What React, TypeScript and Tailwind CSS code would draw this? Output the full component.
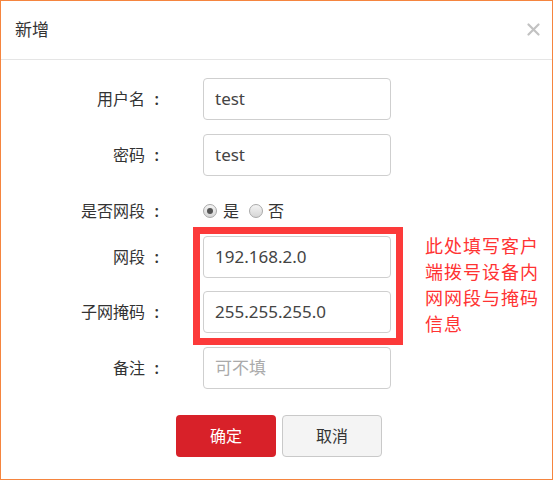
import React from "react";

const font = { fontFamily: '"Noto Sans","Noto Sans CJK SC",sans-serif' };

function Label({ text }: { text: string }) {
  return (
    <div className="w-[161px] flex justify-end text-[16px] text-[#333]">
      <span>{text}</span>
      <span className="inline-block w-[17px] text-right pr-[3px] font-semibold">:</span>
    </div>
  );
}

function Row({ label, children }: { label: string; children: React.ReactNode }) {
  return (
    <div className="flex items-center h-[42px]">
      <Label text={label} />
      <div className="ml-[41px]">{children}</div>
    </div>
  );
}

function Field({ value, placeholder }: { value?: string; placeholder?: string }) {
  return (
    <div className="w-[188px] h-[42px] border border-[#cfcfcf] rounded-[4px] px-[11px] flex items-center text-[17px] bg-white">
      {value ? (
        <span className="text-[#444]">{value}</span>
      ) : (
        <span className="text-[#aaa]">{placeholder}</span>
      )}
    </div>
  );
}

function Radio({ checked }: { checked?: boolean }) {
  return (
    <span className="w-[14px] h-[14px] rounded-full border border-[#a9a9a9] bg-gradient-to-b from-[#f4f4f4] to-[#d6d6d6] flex items-center justify-center">
      {checked && <span className="w-[6px] h-[6px] rounded-full bg-[#555]" />}
    </span>
  );
}

export default function App() {
  return (
    <div style={font} className="relative w-[553px] h-[480px] border border-[#f5853f] bg-white">
      <div className="h-[59px] border-b border-[#e5e5e5] flex items-center justify-between pl-[14px] pr-[12px]">
        <span className="text-[17px] text-[#333]">新增</span>
        <svg width="13" height="13" viewBox="0 0 13 13" className="mt-[-2px]">
          <path d="M1.5 1.5 L11.5 11.5 M11.5 1.5 L1.5 11.5" stroke="#c2c2c2" strokeWidth="2.2" strokeLinecap="round" />
        </svg>
      </div>

      <div className="pt-[18px]">
        <Row label="用户名">
          <Field value="test" />
        </Row>
        <div className="mt-[14px]">
          <Row label="密码">
            <Field value="test" />
          </Row>
        </div>
        <div className="mt-[20px] flex items-center h-[30px]">
          <Label text="是否网段" />
          <div className="ml-[41px] flex items-center text-[16px] text-[#333]">
            <Radio checked />
            <span className="ml-[6px]">是</span>
            <span className="ml-[10px]">
              <Radio />
            </span>
            <span className="ml-[5px]">否</span>
          </div>
        </div>
        <div className="mt-[10px]">
          <Row label="网段">
            <Field value="192.168.2.0" />
          </Row>
        </div>
        <div className="mt-[13px]">
          <Row label="子网掩码">
            <Field value="255.255.255.0" />
          </Row>
        </div>
        <div className="mt-[14px]">
          <Row label="备注">
            <Field placeholder="可不填" />
          </Row>
        </div>
        <div className="mt-[26px] flex pl-[175px] gap-[6px]">
          <button className="w-[100px] h-[42px] rounded-[4px] bg-[#d82129] text-white text-[16px]">确定</button>
          <button className="w-[100px] h-[42px] rounded-[4px] bg-[#f4f4f4] border border-[#c9c9c9] text-[#333] text-[16px]">取消</button>
        </div>
      </div>

      <div className="absolute left-[192px] top-[226px] w-[210px] h-[118px] border-[7px] border-[#fc3a3a] pointer-events-none" />
      <div className="absolute left-[424px] top-[232px] text-[18px] leading-[26px] tracking-[1px] text-[#ff3333]">
        <div>此处填写客户</div>
        <div>端拨号设备内</div>
        <div>网网段与掩码</div>
        <div>信息</div>
      </div>
    </div>
  );
}
